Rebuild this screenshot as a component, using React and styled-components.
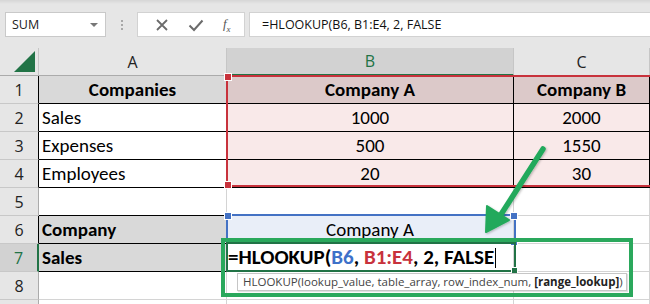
import styled, { createGlobalStyle } from 'styled-components'

const GlobalStyle = createGlobalStyle`
  html, body { margin: 0; padding: 0; background: #fff; }
  body { width: 650px; height: 304px; overflow: hidden; }
`

const CELL_FONT = `"Carlito", "Lato", sans-serif`
const UI_FONT = `"Open Sans", "Noto Sans", sans-serif`

const columns = ['A', 'B', 'C']
const selectedColumn = 'B'

const rows = [
  { n: 1, cells: [
    { text: 'Companies', bold: true, align: 'center', bg: '#d9d9d9', bb: '#000', br: '#000' },
    { text: 'Company A', bold: true, align: 'center', bg: '#dcc9c9', bb: '#000', br: '#000' },
    { text: 'Company B', bold: true, align: 'center', bg: '#dcc9c9', bb: '#000', br: '#000' },
  ], dark: true },
  { n: 2, cells: [
    { text: 'Sales', bb: '#000', br: '#000' },
    { text: '1000', align: 'center', bg: '#f9e9e9', bb: '#000', br: '#000' },
    { text: '2000', align: 'center', bg: '#f9e9e9', bb: '#000', br: '#000' },
  ], dark: true },
  { n: 3, cells: [
    { text: 'Expenses', bb: '#000', br: '#000' },
    { text: '500', align: 'center', bg: '#f9e9e9', bb: '#000', br: '#000' },
    { text: '1550', align: 'center', bg: '#f9e9e9', bb: '#000', br: '#000' },
  ], dark: true },
  { n: 4, cells: [
    { text: 'Employees', bb: '#000', br: '#000' },
    { text: '20', align: 'center', bg: '#f9e9e9', bb: '#000', br: '#000' },
    { text: '30', align: 'center', bg: '#f9e9e9', bb: '#000', br: '#000' },
  ], dark: true },
  { n: 5, cells: [{ bb: '#000' }, {}, {}] },
  { n: 6, cells: [
    { text: 'Company', bold: true, bg: '#d9d9d9', bb: '#000' },
    { text: 'Company A', align: 'center', bg: '#e9eef8' },
    {},
  ], dark: true },
  { n: 7, cells: [
    { text: 'Sales', bold: true, bg: '#d9d9d9', bb: '#000' },
    { formula: true },
    {},
  ], active: true },
  { n: 8, cells: [{}, {}, {}] },
  { n: '', cells: [{}, {}, {}] },
]

export default function App() {
  return (
    <Page>
      <GlobalStyle />
      <Toolbar>
        <NameBox>
          <span>SUM</span>
          <DropCaret />
        </NameBox>
        <Grip>
          <i /><i /><i />
        </Grip>
        <FxButtons>
          <svg width="14" height="14" viewBox="0 0 14 14">
            <path d="M2 2 L12 12 M12 2 L2 12" stroke="#6b6b6b" strokeWidth="1.8" />
          </svg>
          <svg width="16" height="14" viewBox="0 0 16 14">
            <path d="M1.5 7.5 L6 12 L14.5 2.5" stroke="#6b6b6b" strokeWidth="2" fill="none" />
          </svg>
          <FxLabel>f<sub>x</sub></FxLabel>
        </FxButtons>
        <FormulaInput>=HLOOKUP(B6, B1:E4, 2, FALSE</FormulaInput>
      </Toolbar>

      <Sheet>
        <Corner>
          <svg width="21" height="21" viewBox="0 0 21 21">
            <path d="M21 0 L21 21 L0 21 Z" fill="#217346" />
          </svg>
        </Corner>
        {columns.map(c => (
          <ColHeader key={c} $selected={c === selectedColumn}>{c}</ColHeader>
        ))}

        {rows.map((row, i) => (
          <Row key={i} row={row} />
        ))}

        <RangeBox $color="#c8323c" style={{ left: 226, top: 27, width: 500, height: 112 }}>
          <Handle $color="#c8323c" $x="left" $y="top" />
          <Handle $color="#c8323c" $x="left" $y="bottom" />
        </RangeBox>
        <RangeBox $color="#4472c4" style={{ left: 226, top: 166, width: 290, height: 30 }}>
          <Handle $color="#4472c4" $x="left" $y="top" />
          <Handle $color="#4472c4" $x="right" $y="top" />
          <Handle $color="#4472c4" $x="right" $y="bottom" />
        </RangeBox>
        <ActiveCell />
        <Highlight />
        <Tip>
          HLOOKUP(lookup_value, table_array, row_index_num, <b>[range_lookup]</b>)
        </Tip>
        <Arrow width="80" height="110" viewBox="0 0 80 110">
          <defs>
            <filter id="sh" x="-20%" y="-20%" width="140%" height="140%">
              <feDropShadow dx="1" dy="1" stdDeviation="1" floodColor="#000" floodOpacity="0.25" />
            </filter>
          </defs>
          <g filter="url(#sh)">
            <path d="M65 11 L22 78" stroke="#23a95b" strokeWidth="5.5" strokeLinecap="round" />
            <path d="M8 94 L9 68 L31 82 Z" fill="#23a95b" stroke="#23a95b" strokeWidth="2" strokeLinejoin="round" />
          </g>
        </Arrow>
      </Sheet>
    </Page>
  )
}

function Row({ row }) {
  return (
    <>
      <RowHeader $dark={row.dark} $active={row.active}>{row.n}</RowHeader>
      {row.cells.map((cell, i) => (
        <Cell
          key={i}
          $bg={cell.bg}
          $bold={cell.bold}
          $align={cell.align}
          $bb={cell.bb}
          $br={cell.br}
        >
          {cell.formula ? <Formula /> : cell.text}
        </Cell>
      ))}
    </>
  )
}

function Formula() {
  return (
    <FormulaText>
      =HLOOKUP(<Ref $c="#3d71c9">B6</Ref>, <Ref $c="#c8323c">B1:E4</Ref>, 2, FALSE<Caret />
    </FormulaText>
  )
}

const Page = styled.div`
  width: 650px;
  height: 304px;
  overflow: hidden;
  background: #fff;
`
const Toolbar = styled.div`
  height: 48px;
  box-sizing: border-box;
  padding: 12px 0 0 5px;
  display: flex;
  align-items: flex-start;
  background: linear-gradient(#d6d6d6 0, #e6e6e6 4px);
  font-family: ${UI_FONT};
`
const NameBox = styled.div`
  width: 101px;
  height: 25px;
  box-sizing: border-box;
  background: #fff;
  border: 1px solid #c9c9c9;
  display: flex;
  align-items: center;
  justify-content: space-between;
  padding: 0 7px 0 6px;
  font-size: 12.5px;
  color: #222;
`
const DropCaret = styled.span`
  width: 0;
  height: 0;
  border-left: 4px solid transparent;
  border-right: 4px solid transparent;
  border-top: 4px solid #777;
`
const Grip = styled.div`
  width: 31px;
  height: 25px;
  display: flex;
  flex-direction: column;
  align-items: center;
  justify-content: center;
  gap: 2px;
  i {
    width: 2px;
    height: 2px;
    background: #a8a8a8;
  }
`
const FxButtons = styled.div`
  width: 108px;
  height: 25px;
  box-sizing: border-box;
  background: #fff;
  border: 1px solid #d2d2d2;
  display: flex;
  align-items: center;
  justify-content: space-around;
  padding: 0 4px 0 8px;
  margin-right: 4px;
`
const FxLabel = styled.span`
  font-family: "Liberation Serif", serif;
  font-style: italic;
  font-size: 13px;
  color: #555;
  sub { font-size: 9px; }
`
const FormulaInput = styled.div`
  flex: 1;
  height: 25px;
  box-sizing: border-box;
  background: #fff;
  border: 1px solid #d2d2d2;
  border-right: none;
  display: flex;
  align-items: center;
  padding-left: 12px;
  font-size: 12.5px;
  color: #111;
`
const Sheet = styled.div`
  position: relative;
  display: grid;
  grid-template-columns: 39px 188px 287px 136px;
  grid-auto-rows: 28px;
  background: #fff;
`
const Corner = styled.div`
  background: #e6e6e6;
  border-right: 1px solid #c6c6c6;
  border-bottom: 1px solid #ababab;
  display: flex;
  align-items: flex-end;
  justify-content: flex-end;
  padding: 0 3px 3px 0;
`
const ColHeader = styled.div`
  background: ${p => (p.$selected ? '#d2d2d2' : '#e6e6e6')};
  color: ${p => (p.$selected ? '#217346' : '#222')};
  border-right: 1px solid #c6c6c6;
  border-bottom: ${p => (p.$selected ? '2px solid #217346' : '1px solid #ababab')};
  display: flex;
  align-items: center;
  justify-content: center;
  font-family: ${UI_FONT};
  font-size: 16px;
`
const RowHeader = styled.div`
  background: ${p => (p.$active ? '#d2d2d2' : '#e6e6e6')};
  color: ${p => (p.$active ? '#217346' : '#222')};
  border-right: ${p => (p.$active ? '2px solid #217346' : p.$dark ? '1px solid #000' : '1px solid #ababab')};
  border-bottom: 1px solid #c8c8c8;
  display: flex;
  align-items: center;
  justify-content: center;
  font-family: ${UI_FONT};
  font-size: 16px;
`
const Cell = styled.div`
  box-sizing: border-box;
  background: ${p => p.$bg || '#fff'};
  border-right: 1px solid ${p => p.$br || '#d4d4d4'};
  border-bottom: 1px solid ${p => p.$bb || '#d4d4d4'};
  display: flex;
  align-items: center;
  justify-content: ${p => (p.$align === 'center' ? 'center' : 'flex-start')};
  padding: 0 3px;
  font-family: ${CELL_FONT};
  font-size: 19px;
  font-weight: ${p => (p.$bold ? 700 : 400)};
  color: #000;
  white-space: nowrap;
`
const FormulaText = styled.span`
  display: block;
  font-weight: 700;
  font-size: 21px;
  line-height: 27px;
  margin-left: -2px;
  white-space: pre;
`
const Ref = styled.span`
  color: ${p => p.$c};
`
const Caret = styled.i`
  display: inline-block;
  width: 1px;
  height: 20px;
  background: #000;
  margin-left: 1px;
  vertical-align: -4px;
`
const RangeBox = styled.div`
  position: absolute;
  border: 2px solid ${p => p.$color};
  box-sizing: border-box;
  pointer-events: none;
`
const Handle = styled.span`
  position: absolute;
  width: 6px;
  height: 6px;
  background: ${p => p.$color};
  border: 1px solid #fff;
  ${p => (p.$x === 'left' ? 'left: -4px;' : 'right: -4px;')}
  ${p => (p.$y === 'top' ? 'top: -4px;' : 'bottom: -4px;')}
`
const ActiveCell = styled.div`
  position: absolute;
  left: 226px;
  top: 194px;
  width: 290px;
  height: 30px;
  box-sizing: border-box;
  border: 2px solid #217346;
  &::after {
    content: '';
    position: absolute;
    right: -4px;
    bottom: -4px;
    width: 5px;
    height: 5px;
    background: #217346;
    border: 1px solid #fff;
  }
`
const Highlight = styled.div`
  position: absolute;
  left: 221px;
  top: 190px;
  width: 412px;
  height: 59px;
  box-sizing: border-box;
  border: 4px solid #2aa85c;
`
const Tip = styled.div`
  position: absolute;
  left: 237px;
  top: 225px;
  width: 390px;
  height: 18px;
  box-sizing: border-box;
  background: #fff;
  border: 1px solid #c6c6c6;
  box-shadow: 1px 1px 1px rgba(0, 0, 0, 0.12);
  padding-left: 5px;
  font-family: ${UI_FONT};
  font-size: 11.5px;
  line-height: 16px;
  color: #444;
  white-space: pre;
  b { color: #222; }
`
const Arrow = styled.svg`
  position: absolute;
  left: 478px;
  top: 90px;
  overflow: visible;
`
